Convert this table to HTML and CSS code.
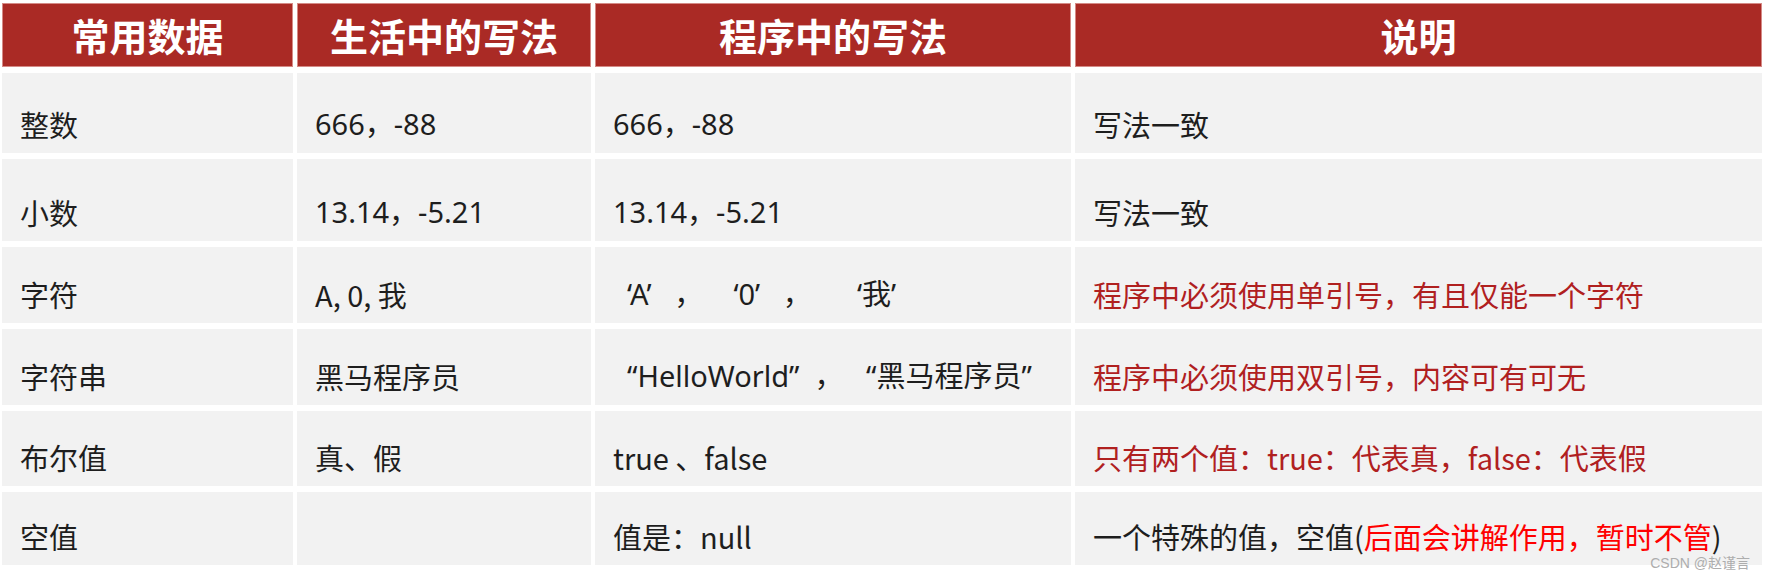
FILE: index.html
```html
<!DOCTYPE html>
<html lang="zh-CN">
<head>
<meta charset="utf-8">
<title>数据类型</title>
<link rel="stylesheet" href="styles.css">
</head>
<body>
<div class="sheet">
  <div class="table">
    <div class="head">常用数据</div>
    <div class="head">生活中的写法</div>
    <div class="head">程序中的写法</div>
    <div class="head">说明</div>

    <div class="cell">整数</div>
    <div class="cell lat">666，-88</div>
    <div class="cell lat">666，-88</div>
    <div class="cell">写法一致</div>

    <div class="cell">小数</div>
    <div class="cell lat">13.14，-5.21</div>
    <div class="cell lat">13.14，-5.21</div>
    <div class="cell">写法一致</div>

    <div class="cell">字符</div>
    <div class="cell">A, 0, 我</div>
    <div class="cell lat indent">‘A’   ，    ‘0’   ，      ‘我’</div>
    <div class="cell note">程序中必须使用单引号，有且仅能一个字符</div>

    <div class="cell">字符串</div>
    <div class="cell">黑马程序员</div>
    <div class="cell lat indent">“HelloWorld”  ，   “黑马程序员”</div>
    <div class="cell note">程序中必须使用双引号，内容可有可无</div>

    <div class="cell">布尔值</div>
    <div class="cell">真、假</div>
    <div class="cell">true 、false</div>
    <div class="cell note">只有两个值：true：代表真，false：代表假</div>

    <div class="cell">空值</div>
    <div class="cell"></div>
    <div class="cell">值是：null</div>
    <div class="cell">一个特殊的值，空值(<span class="alert">后面会讲解作用，暂时不管</span>)</div>
  </div>
  <div class="watermark">CSDN @赵谨言</div>
</div>
</body>
</html>
```

FILE: styles.css
```css
html, body {
  margin: 0;
  padding: 0;
  background: #ffffff;
}

body {
  font-family: "Noto Sans CJK SC", "Noto Sans", sans-serif;
}

.sheet {
  position: relative;
  width: 1766px;
  height: 575px;
  padding: 3px 0 0 2px;
  box-sizing: border-box;
}

.table {
  display: grid;
  grid-template-columns: 291px 294px 476px 687px;
  grid-template-rows: 64px 80px 82px 76px 76px 75px 73px;
  column-gap: 4px;
  row-gap: 6px;
}

.head {
  background: #aa2a25;
  color: #ffffff;
  font-weight: 700;
  font-size: 38px;
  line-height: 1;
  display: flex;
  align-items: center;
  justify-content: center;
  box-shadow: inset 0 0 0 1px #d58a86;
}

.cell {
  background: #f2f2f2;
  color: #1e1e1e;
  font-size: 29px;
  line-height: 1.2;
  display: flex;
  align-items: flex-end;
  padding: 0 18px 11px 18px;
  white-space: pre;
}

.lat {
  font-family: "Noto Sans", "Noto Sans CJK SC", sans-serif;
}

.indent {
  padding-left: 32px;
}

.note {
  color: #b0201f;
}

.alert {
  color: #ff0000;
}

.watermark {
  position: absolute;
  right: 16px;
  bottom: 5px;
  font-size: 14px;
  line-height: 1;
  color: #adadad;
  font-family: "Liberation Sans", "Noto Sans CJK SC", sans-serif;
}
```
